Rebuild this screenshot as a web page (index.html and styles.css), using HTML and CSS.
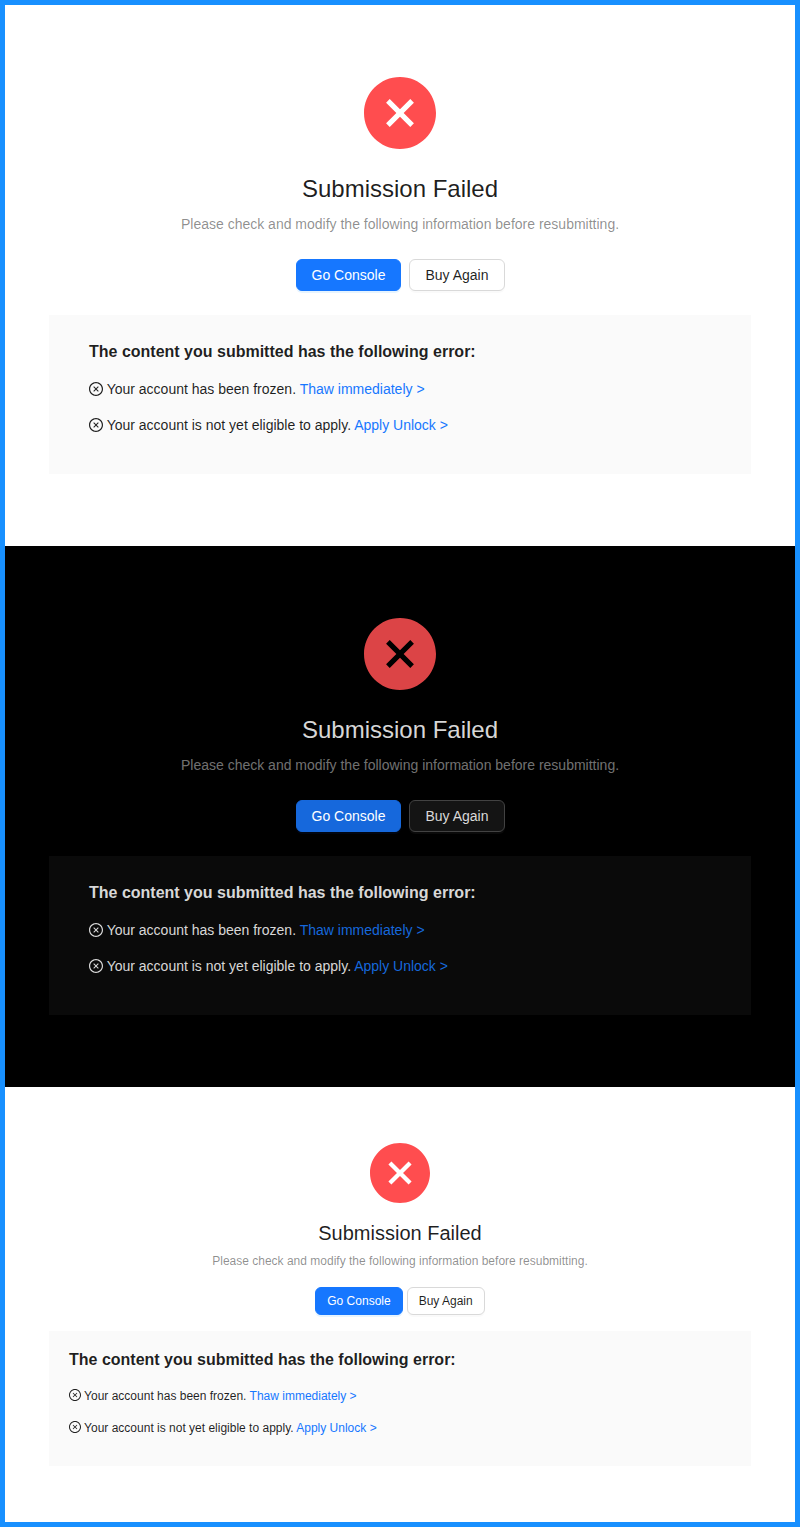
FILE: index.html
```html
<!DOCTYPE html>
<html lang="en">
<head>
<meta charset="utf-8">
<title>Submission Failed</title>
<link rel="stylesheet" href="styles.css">
</head>
<body>
<svg width="0" height="0" class="defs" aria-hidden="true">
<symbol id="close-filled" viewBox="64 64 896 896"><path fill-rule="evenodd" d="M512 64c247.4 0 448 200.6 448 448S759.4 960 512 960 64 759.4 64 512 264.6 64 512 64zm127.98 274.82h-.04l-.08.06L512 466.75 384.14 338.88c-.04-.05-.06-.06-.08-.06a.12.12 0 00-.07 0c-.03 0-.05.01-.09.05l-45.02 45.02a.2.2 0 00-.05.09.12.12 0 000 .07v.02a.27.27 0 00.06.06L466.75 512 338.88 639.86c-.05.04-.06.06-.06.08a.12.12 0 000 .07c0 .03.01.05.05.09l45.02 45.02a.2.2 0 00.09.05.12.12 0 00.07 0c.02 0 .04-.01.08-.05L512 557.25l127.86 127.87c.04.04.06.05.08.05a.12.12 0 00.07 0c.03 0 .05-.01.09-.05l45.02-45.02a.2.2 0 00.05-.09.12.12 0 000-.07v-.02a.27.27 0 00-.05-.06L557.25 512l127.87-127.86c.04-.04.05-.06.05-.08a.12.12 0 000-.07c0-.03-.01-.05-.05-.09l-45.02-45.02a.2.2 0 00-.09-.05.12.12 0 00-.07 0z"/></symbol>
<symbol id="close-outlined" viewBox="64 64 896 896"><path fill-rule="evenodd" d="M512 64c247.4 0 448 200.6 448 448S759.4 960 512 960 64 759.4 64 512 264.6 64 512 64zm0 76c-205.4 0-372 166.6-372 372s166.6 372 372 372 372-166.6 372-372-166.6-372-372-372zm128.01 198.83c.03 0 .05.01.09.06l45.02 45.01a.2.2 0 01.05.09.12.12 0 010 .07c0 .02-.01.04-.05.08L557.25 512l127.87 127.86a.27.27 0 01.05.06v.02a.12.12 0 010 .07c0 .03-.01.05-.05.09l-45.02 45.02a.2.2 0 01-.09.05.12.12 0 01-.07 0c-.02 0-.04-.01-.08-.05L512 557.25 384.14 685.12c-.04.04-.06.05-.08.05a.12.12 0 01-.07 0c-.03 0-.05-.01-.09-.05l-45.02-45.02a.2.2 0 01-.05-.09.12.12 0 010-.07c0-.02.01-.04.06-.08L466.75 512 338.88 384.14a.27.27 0 01-.05-.06l-.01-.02a.12.12 0 010-.07c0-.03.01-.05.05-.09l45.02-45.02a.2.2 0 01.09-.05.12.12 0 01.07 0c.02 0 .04.01.08.06L512 466.75l127.86-127.86c.04-.05.06-.06.08-.06a.12.12 0 01.07 0z"/></symbol>
</svg>
<section class="result">
<svg class="result-icon"><use href="#close-filled"/></svg>
<div class="title">Submission Failed</div>
<div class="subtitle">Please check and modify the following information before resubmitting.</div>
<div class="extra"><button class="btn primary">Go Console</button><button class="btn">Buy Again</button></div>
<div class="content">
<p class="heading">The content you submitted has the following error:</p>
<p class="item"><span class="icon"><svg><use href="#close-outlined"/></svg></span> Your account has been frozen. <a>Thaw immediately &gt;</a></p>
<p class="item"><span class="icon"><svg><use href="#close-outlined"/></svg></span> Your account is not yet eligible to apply. <a>Apply Unlock &gt;</a></p>
</div>
</section>
<section class="result dark">
<svg class="result-icon"><use href="#close-filled"/></svg>
<div class="title">Submission Failed</div>
<div class="subtitle">Please check and modify the following information before resubmitting.</div>
<div class="extra"><button class="btn primary">Go Console</button><button class="btn">Buy Again</button></div>
<div class="content">
<p class="heading">The content you submitted has the following error:</p>
<p class="item"><span class="icon"><svg><use href="#close-outlined"/></svg></span> Your account has been frozen. <a>Thaw immediately &gt;</a></p>
<p class="item"><span class="icon"><svg><use href="#close-outlined"/></svg></span> Your account is not yet eligible to apply. <a>Apply Unlock &gt;</a></p>
</div>
</section>
<section class="result compact">
<svg class="result-icon"><use href="#close-filled"/></svg>
<div class="title">Submission Failed</div>
<div class="subtitle">Please check and modify the following information before resubmitting.</div>
<div class="extra"><button class="btn primary">Go Console</button><button class="btn">Buy Again</button></div>
<div class="content">
<p class="heading">The content you submitted has the following error:</p>
<p class="item"><span class="icon"><svg><use href="#close-outlined"/></svg></span> Your account has been frozen. <a>Thaw immediately &gt;</a></p>
<p class="item"><span class="icon"><svg><use href="#close-outlined"/></svg></span> Your account is not yet eligible to apply. <a>Apply Unlock &gt;</a></p>
</div>
</section>
</body>
</html>
```
FILE: styles.css
```css
* { box-sizing: border-box; }
body {
  margin: 0;
  height: 1527px;
  border: 5px solid #1890ff;
  background: #fff;
  font-family: "Liberation Sans", Arial, sans-serif;
}
.defs { display: none; }
.result {
  --text: rgba(0, 0, 0, 0.88);
  --muted: rgba(0, 0, 0, 0.45);
  --primary: #1677ff;
  --error: #ff4d4f;
  --panel: rgba(0, 0, 0, 0.02);
  --btn-bg: #fff;
  --btn-border: #d9d9d9;
  --btn-shadow: 0 2px 0 rgba(0, 0, 0, 0.02);
  --primary-shadow: 0 2px 0 rgba(5, 145, 255, 0.1);
  --on-primary: #fff;
  display: flex;
  flex-direction: column;
  align-items: center;
  padding: 72px 44px;
  color: var(--text);
  font-size: 14px;
  line-height: 1.5714285714285714;
}
.dark {
  --text: rgba(255, 255, 255, 0.85);
  --muted: rgba(255, 255, 255, 0.45);
  --primary: #1668dc;
  --error: #dc4446;
  --panel: rgba(255, 255, 255, 0.04);
  --btn-bg: #141414;
  --btn-border: #424242;
  --btn-shadow: 0 2px 0 rgba(255, 255, 255, 0.04);
  --primary-shadow: 0 2px 0 rgba(0, 60, 180, 0.1);
  background: #000;
}
.result-icon {
  width: 72px;
  height: 72px;
  margin-bottom: 24px;
  fill: var(--error);
}
.title { margin-bottom: 8px; font-size: 24px; line-height: 32px; }
.subtitle { color: var(--muted); }
.extra { display: flex; gap: 8px; margin: 24px 0; }
.btn {
  height: 32px;
  padding: 0 15px;
  border: 1px solid var(--btn-border);
  border-radius: 6px;
  background: var(--btn-bg);
  box-shadow: var(--btn-shadow);
  color: inherit;
  font: inherit;
}
.primary {
  border-color: var(--primary);
  background: var(--primary);
  box-shadow: var(--primary-shadow);
  color: var(--on-primary);
}
.content { width: 100%; padding: 24px 40px; background: var(--panel); }
.content p { margin: 0 0 14px; }
.content .heading { font-size: 16px; font-weight: bold; }
.icon { display: inline-flex; line-height: 0; vertical-align: -0.125em; }
.icon svg { width: 1em; height: 1em; fill: currentColor; }
.item a { color: var(--primary); }
.compact {
  padding: 56px 44px;
  font-size: 12px;
  line-height: 1.6666666666666667;
}
.compact .result-icon { width: 60px; height: 60px; margin-bottom: 16px; }
.compact .title { margin-bottom: 4px; font-size: 20px; line-height: 28px; }
.compact .extra { gap: 4px; margin: 16px 0; }
.compact .btn { height: 28px; padding: 0 11px; }
.compact .content { padding: 16px 20px; }
.compact .content p { margin-bottom: 12px; }
```
